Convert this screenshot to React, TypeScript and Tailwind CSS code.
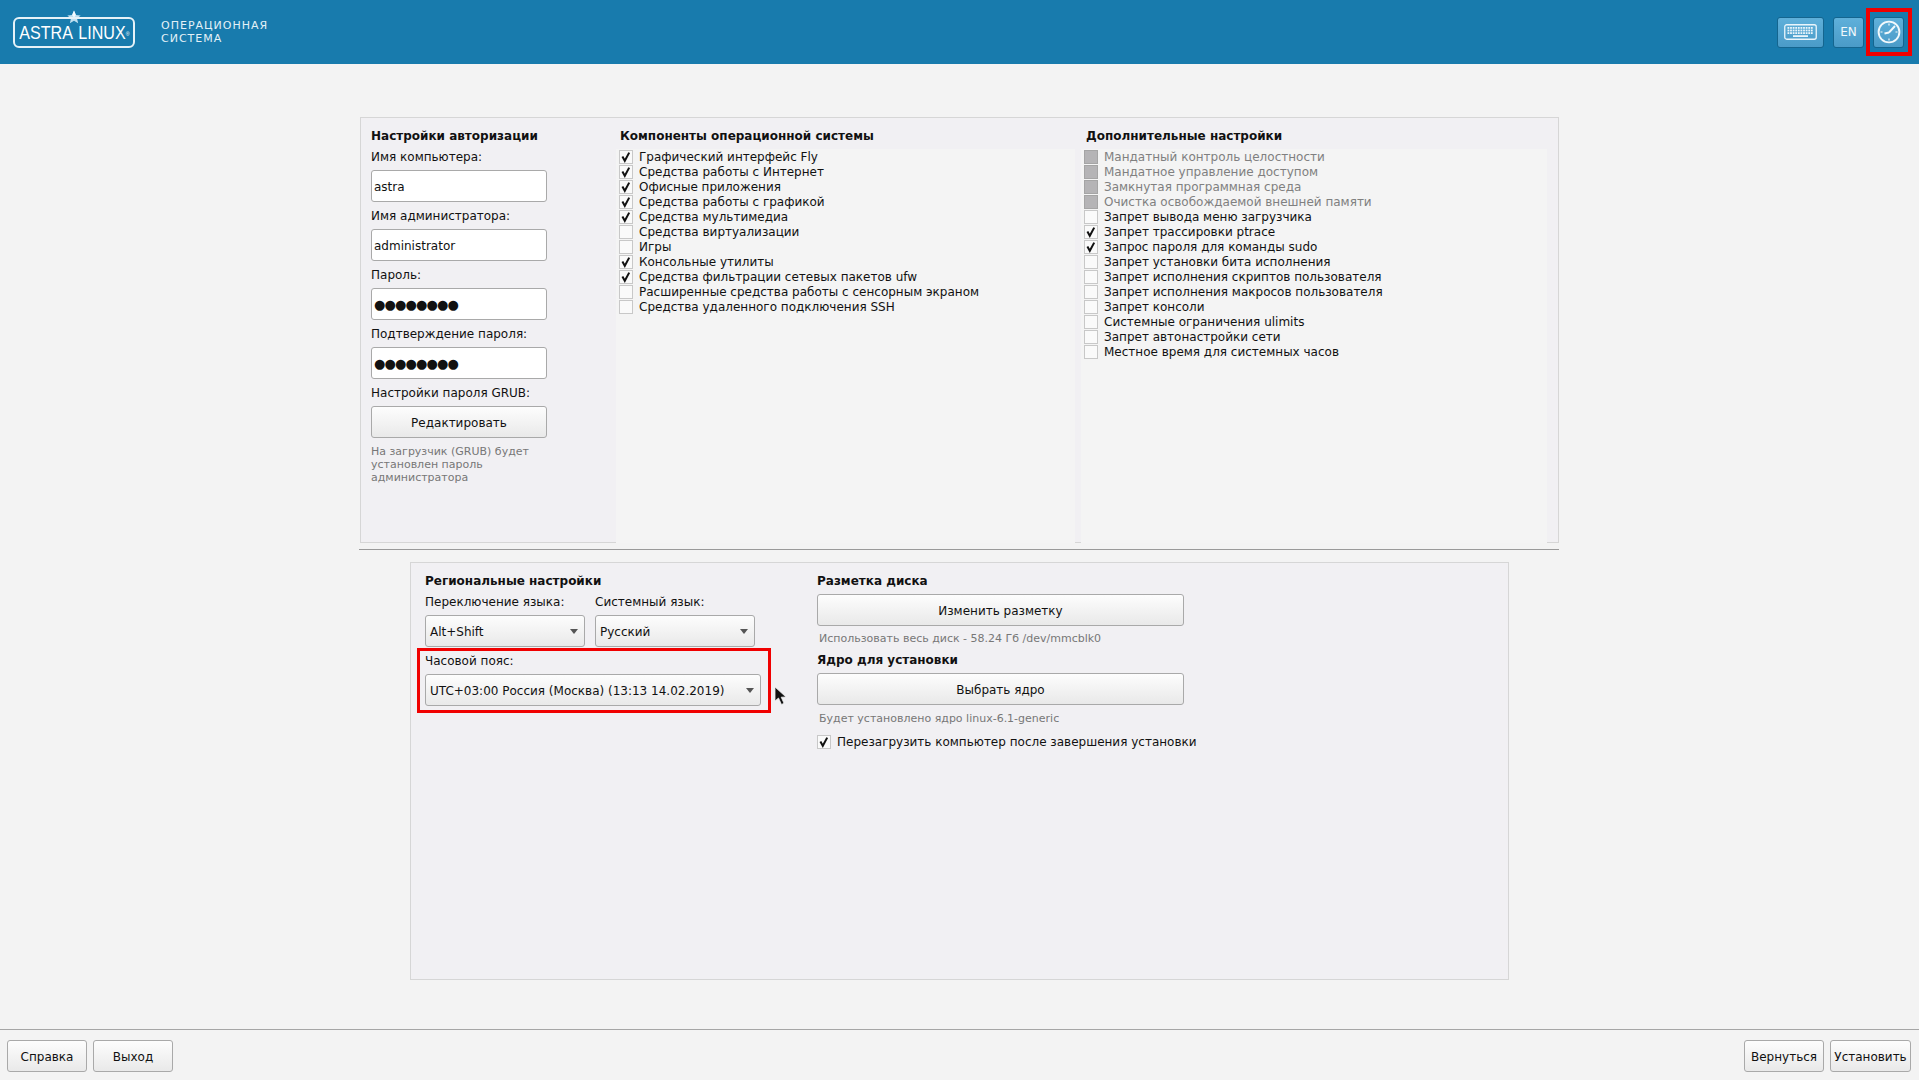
import React from "react";

function CheckMark() {
  return (
    <svg width="12" height="12" viewBox="0 0 12 12" className="block">
      <path d="M2.4 5.4 L4.8 9.8 L9.2 1.6" fill="none" stroke="#111" strokeWidth="2" />
    </svg>
  );
}

function Check({ on, disabled }: { on?: boolean; disabled?: boolean }) {
  return (
    <span
      className={
        disabled
          ? "mt-[1px] flex h-[14px] w-[14px] shrink-0 items-center justify-center border border-[#a5a5a5] bg-[#b5b4b6]"
          : "mt-[1px] flex h-[14px] w-[14px] shrink-0 items-center justify-center border border-[#c8c8c8] bg-[#fafafa]"
      }
    >
      {on ? <CheckMark /> : null}
    </span>
  );
}

function Row({ label, on, disabled }: { label: string; on?: boolean; disabled?: boolean }) {
  return (
    <div className="flex h-[15px] items-start gap-[6px]">
      <Check on={on} disabled={disabled} />
      <span className={disabled ? "block pt-[1px] whitespace-nowrap text-[#808080]" : "block pt-[1px] whitespace-nowrap text-[#111]"}>{label}</span>
    </div>
  );
}

function Btn({ children, className }: { children: React.ReactNode; className: string }) {
  return (
    <div
      className={
        "flex items-center justify-center rounded-[3px] border border-[#a9a9a9] bg-gradient-to-b from-[#fdfdfd] to-[#e9e9e9] pt-[2px] text-[#111] " +
        className
      }
    >
      {children}
    </div>
  );
}

function Combo({ text, className }: { text: string; className: string }) {
  return (
    <div
      className={
        "flex h-[32px] items-center justify-between rounded-[3px] border border-[#a9a9a9] bg-gradient-to-b from-[#fdfdfd] to-[#e9e9e9] pl-[4px] pr-[6px] text-[#111] " +
        className
      }
    >
      <span className="block pt-[2px] whitespace-nowrap">{text}</span>
      <svg width="8" height="5" viewBox="0 0 8 5">
        <path d="M0 0H8L4 5Z" fill="#555" />
      </svg>
    </div>
  );
}

function Label({ children }: { children: React.ReactNode }) {
  return <div className="flex h-[27px] items-center pt-[2px] whitespace-nowrap text-[#111]">{children}</div>;
}

function Field({ label, value, dots }: { label: string; value: string; dots?: boolean }) {
  return (
    <div className="flex h-[59px] flex-col">
      <Label>{label}</Label>
      <div
        className={
          "flex h-[32px] w-[176px] items-center rounded-[3px] border border-[#a9a9a9] bg-white pl-[2px] text-[#111] " +
          (dots ? "text-[13px] tracking-[-0.85px]" : "pt-[2px]")
        }
      >
        {value}
      </div>
    </div>
  );
}

function Heading({ children, className = "" }: { children: React.ReactNode; className?: string }) {
  return <div className={"pt-[1px] font-bold whitespace-nowrap text-[#111] " + className}>{children}</div>;
}

function Star() {
  return (
    <svg width="14" height="14" viewBox="0 0 24 24" className="absolute left-[67px] top-[10px]">
      <path
        d="M12 1 L15.2 8.6 L23.4 9.3 L17.2 14.7 L19.1 22.8 L12 18.5 L4.9 22.8 L6.8 14.7 L0.6 9.3 L8.8 8.6Z"
        fill="#bfe0f0"
      />
      <path d="M12 1 L15.2 8.6 L12 13 L8.8 8.6Z" fill="#f5fbff" />
    </svg>
  );
}

function Logo() {
  return (
    <div className="relative ml-[13px] flex h-[31px] w-[122px] items-center justify-center rounded-[6px] border-2 border-[#e6f2f8] pt-[3px]">
      <span className="font-['Liberation_Sans',sans-serif] text-[18.5px] leading-none [word-spacing:2px] whitespace-nowrap text-white [transform:scaleX(0.87)]">
        ASTRA LINUX
        <sup className="text-[6px]">®</sup>
      </span>
    </div>
  );
}

function KeyboardIcon() {
  const keys: React.ReactNode[] = [];
  for (let r = 0; r < 3; r++) {
    for (let c = 0; c < 10; c++) {
      keys.push(<rect key={r + "-" + c} x={3.5 + c * 2.6} y={3 + r * 2.6} width="1.8" height="1.8" fill="#eaf5fb" />);
    }
  }
  return (
    <svg width="33" height="16" viewBox="0 0 33 16">
      <rect x="0.75" y="0.75" width="31.5" height="14.5" rx="2" fill="none" stroke="#eaf5fb" strokeWidth="1.3" />
      {keys}
      <rect x="9" y="11.2" width="15" height="1.8" fill="#eaf5fb" />
    </svg>
  );
}

function ClockIcon() {
  return (
    <svg width="24" height="24" viewBox="0 0 24 24">
      <circle cx="12" cy="12" r="10.4" fill="none" stroke="#f2f9fc" strokeWidth="1.9" />
      <path d="M12 12.5 L18 6 M12 12.5 L7.5 13.5" stroke="#f2f9fc" strokeWidth="1.9" fill="none" />
      <path d="M12 3.5V5.5M20.5 12H18.5M3.5 12H5.5M12 20.5V18.5" stroke="#f2f9fc" strokeWidth="1.2" fill="none" />
    </svg>
  );
}

function HeadBtn({ children, className }: { children: React.ReactNode; className: string }) {
  return (
    <div
      className={
        "flex h-[31px] items-center justify-center rounded-[3px] border border-[#14658f] bg-gradient-to-b from-[#5fb0da] to-[#4a9bc8] " +
        className
      }
    >
      {children}
    </div>
  );
}

const comps: [string, boolean][] = [
  ["Графический интерфейс Fly", true],
  ["Средства работы с Интернет", true],
  ["Офисные приложения", true],
  ["Средства работы с графикой", true],
  ["Средства мультимедиа", true],
  ["Средства виртуализации", false],
  ["Игры", false],
  ["Консольные утилиты", true],
  ["Средства фильтрации сетевых пакетов ufw", true],
  ["Расширенные средства работы с сенсорным экраном", false],
  ["Средства удаленного подключения SSH", false],
];

const extras: [string, boolean, boolean][] = [
  ["Мандатный контроль целостности", false, true],
  ["Мандатное управление доступом", false, true],
  ["Замкнутая программная среда", false, true],
  ["Очистка освобождаемой внешней памяти", false, true],
  ["Запрет вывода меню загрузчика", false, false],
  ["Запрет трассировки ptrace", true, false],
  ["Запрос пароля для команды sudo", true, false],
  ["Запрет установки бита исполнения", false, false],
  ["Запрет исполнения скриптов пользователя", false, false],
  ["Запрет исполнения макросов пользователя", false, false],
  ["Запрет консоли", false, false],
  ["Системные ограничения ulimits", false, false],
  ["Запрет автонастройки сети", false, false],
  ["Местное время для системных часов", false, false],
];

export default function App() {
  return (
    <div className="relative flex h-[1080px] w-full flex-col overflow-hidden bg-[#f3f3f3] font-['DejaVu_Sans',sans-serif] text-[12px] leading-[15px]">
      <header className="relative flex h-[64px] shrink-0 items-center bg-[#187bad]">
        <Star />
        <Logo />
        <div className="ml-[26px] text-[11px] leading-[13.5px] tracking-[1px] text-[#e4f1f7]">
          <div>ОПЕРАЦИОННАЯ</div>
          <div>СИСТЕМА</div>
        </div>
        <div className="ml-auto mr-[15px] flex items-center">
          <HeadBtn className="w-[47px]">
            <KeyboardIcon />
          </HeadBtn>
          <HeadBtn className="ml-[9px] w-[31px] text-[12px] text-[#f2f9fc]">EN</HeadBtn>
          <HeadBtn className="ml-[9px] w-[31px]">
            <ClockIcon />
          </HeadBtn>
        </div>
        <div className="absolute left-[1866px] top-[8px] h-[48px] w-[46px] border-[4px] border-[#f00000]" />
      </header>

      <main className="flex flex-1 flex-col pt-[53px]">
        <section className="ml-[360px] flex h-[426px] w-[1199px] border border-[#d6d6d6] bg-[#f1f0f3]">
          <div className="flex w-[255px] shrink-0 flex-col pl-[10px] pt-[10px]">
            <Heading className="h-[15px]">Настройки авторизации</Heading>
            <Field label="Имя компьютера:" value="astra" />
            <Field label="Имя администратора:" value="administrator" />
            <Field label="Пароль:" value="●●●●●●●●" dots />
            <Field label="Подтверждение пароля:" value="●●●●●●●●" dots />
            <Label>Настройки пароля GRUB:</Label>
            <Btn className="h-[32px] w-[176px]">Редактировать</Btn>
            <div className="mt-[7px] text-[11px] leading-[13px] text-[#777]">
              На загрузчик (GRUB) будет
              <br />
              установлен пароль
              <br />
              администратора
            </div>
          </div>
          <div className="flex w-[459px] shrink-0 flex-col pt-[10px]">
            <Heading className="ml-[4px] h-[21px]">Компоненты операционной системы</Heading>
            <div className="-mb-[1px] flex-1 bg-[#f4f4f4] pl-[3px]">
              {comps.map(([l, on]) => (
                <Row key={l} label={l} on={on} />
              ))}
            </div>
          </div>
          <div className="w-[6px] shrink-0" />
          <div className="flex w-[466px] shrink-0 flex-col pt-[10px]">
            <Heading className="ml-[5px] h-[21px]">Дополнительные настройки</Heading>
            <div className="-mb-[1px] flex-1 bg-[#f4f4f4] pl-[3px]">
              {extras.map(([l, on, d]) => (
                <Row key={l} label={l} on={on} disabled={d} />
              ))}
            </div>
          </div>
        </section>

        <div className="ml-[359px] mt-[6px] h-px w-[1200px] bg-[#999]" />

        <section className="ml-[410px] mt-[12px] flex h-[418px] w-[1099px] border border-[#d6d6d6] bg-[#f1f0f3] pl-[14px] pt-[10px]">
          <div className="flex w-[392px] shrink-0 flex-col">
            <Heading className="h-[15px]">Региональные настройки</Heading>
            <div className="flex gap-[10px]">
              <div className="flex w-[160px] flex-col">
                <Label>Переключение языка:</Label>
                <Combo text="Alt+Shift" className="w-[160px]" />
              </div>
              <div className="flex w-[160px] flex-col">
                <Label>Системный язык:</Label>
                <Combo text="Русский" className="w-[160px]" />
              </div>
            </div>
            <Label>Часовой пояс:</Label>
            <Combo text="UTC+03:00 Россия (Москва) (13:13 14.02.2019)" className="w-[336px]" />
          </div>
          <div className="flex flex-col">
            <Heading className="h-[15px]">Разметка диска</Heading>
            <Btn className="mt-[6px] h-[32px] w-[367px]">Изменить разметку</Btn>
            <div className="ml-[2px] mt-[6px] h-[13px] text-[11px] leading-[13px] text-[#777]">
              Использовать весь диск - 58.24 Гб /dev/mmcblk0
            </div>
            <Heading className="mt-[7px] h-[15px]">Ядро для установки</Heading>
            <Btn className="mt-[6px] h-[32px] w-[367px]">Выбрать ядро</Btn>
            <div className="ml-[2px] mt-[7px] h-[13px] text-[11px] leading-[13px] text-[#777]">
              Будет установлено ядро linux-6.1-generic
            </div>
            <div className="mt-[9px]">
              <Row label="Перезагрузить компьютер после завершения установки" on />
            </div>
          </div>
        </section>

        <div className="absolute left-[417px] top-[648px] h-[65px] w-[354px] border-[3px] border-[#f00000]" />
        <svg width="14" height="20" viewBox="0 0 14 20" className="absolute left-[774px] top-[686px]">
          <path d="M1 1 L1 15 L4.5 12 L7.5 18.5 L10 17.3 L7.2 11.2 L12 11Z" fill="#111" stroke="#eee" strokeWidth="0.8" />
        </svg>
      </main>

      <footer className="h-[51px] shrink-0 border-t border-[#a5a5a5] pt-[10px]">
        <div className="flex items-start pl-[7px] pr-[8px]">
          <Btn className="h-[32px] w-[80px]">Справка</Btn>
          <Btn className="ml-[6px] h-[32px] w-[80px]">Выход</Btn>
          <Btn className="ml-auto h-[32px] w-[80px]">Вернуться</Btn>
          <Btn className="ml-[6px] h-[32px] w-[81px]">Установить</Btn>
        </div>
      </footer>
    </div>
  );
}
